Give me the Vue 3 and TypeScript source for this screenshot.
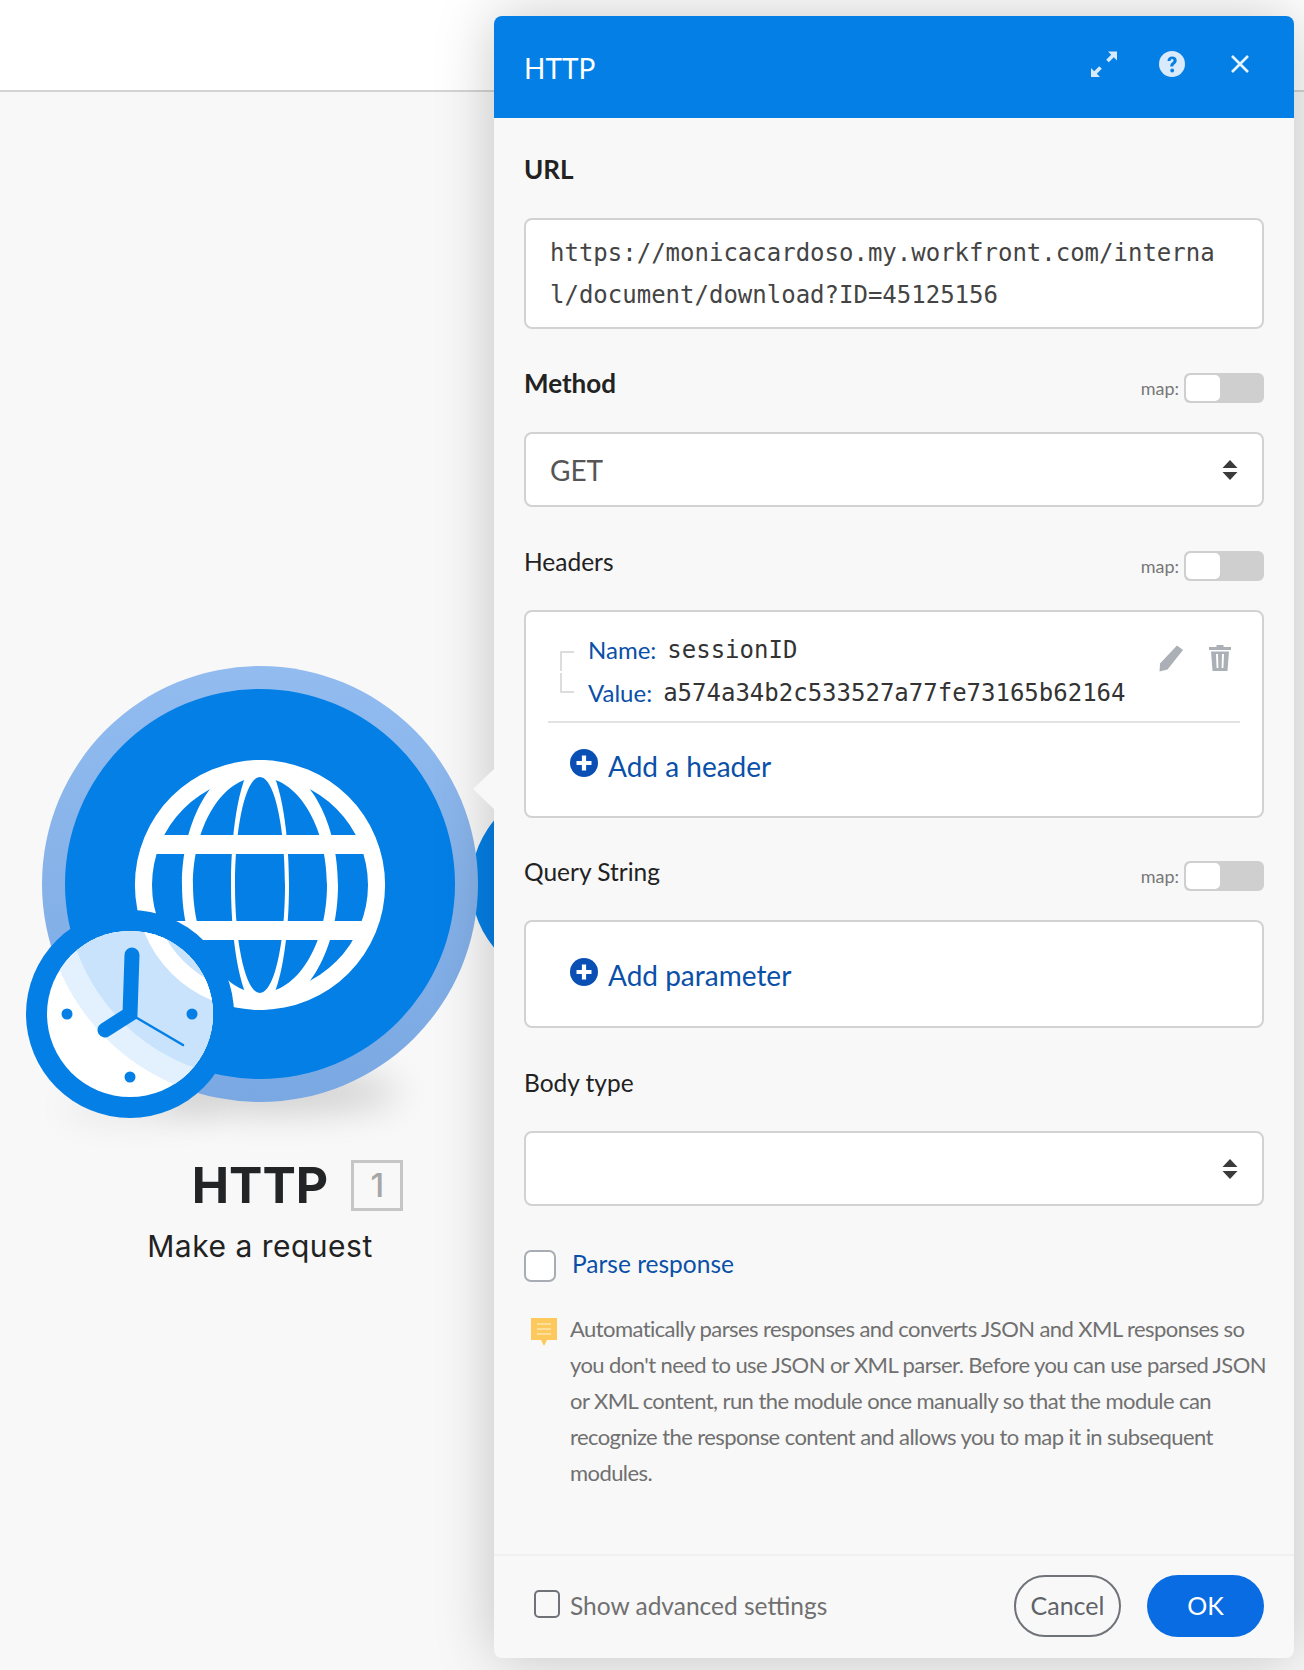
<template>
  <div class="page">
    <div class="topbar"></div>

    <div class="node">
      <svg class="node-art" viewBox="0 640 494 560" width="494" height="560">
        <defs>
          <linearGradient id="ring" x1="0" y1="0" x2="0" y2="1">
            <stop offset="0" stop-color="#92bcf0" />
            <stop offset="1" stop-color="#7aa8e2" />
          </linearGradient>
          <filter id="soft" filterUnits="userSpaceOnUse" x="0" y="960" width="494" height="240">
            <feGaussianBlur stdDeviation="18" />
          </filter>
          <clipPath id="face">
            <circle cx="130" cy="1014" r="83" />
          </clipPath>
          <g id="globe">
            <path fill="#fff" fill-rule="evenodd" d="M260 760a125 125 0 1 0 0 250a125 125 0 1 0 0-250zM260 777a108 108 0 1 1 0 216a108 108 0 1 1 0-216z" />
            <path fill="#fff" fill-rule="evenodd" d="M260 760c-16 0-29 56-29 125s13 125 29 125s29-56 29-125s-13-125-29-125zM260 777c-14 0-25 48-25 108s11 108 25 108s25-48 25-108s-11-108-25-108z" />
            <path fill="#fff" fill-rule="evenodd" d="M260 760c-43 0-78 56-78 125s35 125 78 125s78-56 78-125s-35-125-78-125zM260 777c-37 0-67 48-67 108s30 108 67 108s67-48 67-108s-30-108-67-108z" />
            <rect x="150" y="835" width="220" height="19" fill="#fff" />
            <rect x="150" y="921" width="220" height="19" fill="#fff" />
          </g>
        </defs>

        <ellipse cx="275" cy="1092" rx="125" ry="20" fill="#000" opacity="0.17" filter="url(#soft)" />
        <ellipse cx="140" cy="1108" rx="80" ry="10" fill="#000" opacity="0.1" filter="url(#soft)" />
        <circle cx="570" cy="884" r="99" fill="#0580e6" />
        <circle cx="260" cy="884" r="218" fill="url(#ring)" />
        <circle cx="260" cy="884" r="195" fill="#037fe6" />
        <use href="#globe" />

        <circle cx="130" cy="1014" r="104" fill="#037fe6" />
        <circle cx="130" cy="1014" r="83" fill="#fff" />
        <g clip-path="url(#face)">
          <circle cx="260" cy="884" r="218" fill="#e2f1fd" />
          <circle cx="260" cy="884" r="195" fill="#c8e3fb" />
          <use href="#globe" />
        </g>
        <circle cx="67" cy="1014" r="5.5" fill="#037fe6" />
        <circle cx="192" cy="1014" r="5.5" fill="#037fe6" />
        <circle cx="130" cy="1077" r="5.5" fill="#037fe6" />
        <path d="M132 955 L130 1014 L105 1030" fill="none" stroke="#037fe6" stroke-width="15" stroke-linecap="round" stroke-linejoin="miter" />
        <path d="M137 1018 L183 1045" stroke="#037fe6" stroke-width="2.5" stroke-linecap="round" />
      </svg>

      <div class="node-title">
        <span class="node-name">HTTP<span class="node-badge">1</span></span>
      </div>
      <div class="node-sub">Make a request</div>
    </div>

    <div class="pointer"></div>

    <section class="panel">
      <header class="panel-head">
        <h2>HTTP</h2>
        <div class="head-icons">
          <svg width="28" height="28" viewBox="0 0 28 28" fill="#d8eafc">
            <path d="M18 1.500h9v9l-3.200-3.200-5 5-2.600-2.600 5-5zM10 27H1v-9l3.200 3.200 5-5 2.600 2.600-5 5z" />
          </svg>
          <svg width="28" height="28" viewBox="0 0 28 28">
            <circle cx="14" cy="14" r="13" fill="#d8eafc" />
            <path d="M9.500 11c0-3 2-4.600 4.700-4.600s4.500 1.600 4.500 4c0 3.600-3.500 3.400-3.500 6.200h-3c0-4 3.300-4 3.300-6 0-1-.7-1.500-1.400-1.500-1 0-1.500.7-1.600 1.900z" fill="#037fe6" />
            <circle cx="14.200" cy="20.500" r="1.900" fill="#037fe6" />
          </svg>
          <svg width="28" height="28" viewBox="-4 -4 28 28">
            <path d="M2 2l16 16M18 2L2 18" stroke="#e6f2fd" stroke-width="2.600" />
          </svg>
        </div>
      </header>

      <div class="panel-body">
        <div class="label-row first"><label class="strong">URL</label></div>
        <div class="box url-box">https://monicacardoso.my.workfront.com/internal/document/download?ID=45125156</div>

        <div class="label-row">
          <label class="strong">Method</label>
          <span class="map"><em>map:</em><i class="toggle"><b></b></i></span>
        </div>
        <div class="box select">
          <span>GET</span>
          <svg width="16" height="20" viewBox="0 0 16 20" fill="#3a3a3a"><path d="M8 0l7.500 8H.5zM8 20L.5 12h15z" /></svg>
        </div>

        <div class="label-row">
          <label>Headers</label>
          <span class="map"><em>map:</em><i class="toggle"><b></b></i></span>
        </div>
        <div class="box list-box">
          <div class="header-item">
            <div class="tree"><i></i><i></i></div>
            <div class="kv">
              <div class="kv-row"><span class="key">Name:</span><code>sessionID</code></div>
              <div class="kv-row"><span class="key">Value:</span><code>a574a34b2c533527a77fe73165b62164</code></div>
            </div>
            <div class="item-tools">
              <svg width="26" height="28" viewBox="0 0 26 28" fill="#aab0b5">
                <path d="M19 1.500l6 4.500L9.500 25.500 1.500 27.500l.5-8z" />
              </svg>
              <svg width="24" height="28" viewBox="0 0 24 28" fill="#aab0b5">
                <path d="M8.500 3V1h7v2H23v3H1V3zM3 7.500h18L19.500 27h-15zM8 10l.6 14h1.800L10 10zm6 0l-.4 14h1.800L16 10z" fill-rule="evenodd" />
              </svg>
            </div>
          </div>
          <a class="add add-header">
            <svg width="28" height="28" viewBox="0 0 28 28"><circle cx="14" cy="14" r="14" fill="#0a50b4" /><path d="M14 6.500v15M6.500 14h15" stroke="#fff" stroke-width="4.200" /></svg>
            Add a header
          </a>
        </div>

        <div class="label-row">
          <label>Query String</label>
          <span class="map"><em>map:</em><i class="toggle"><b></b></i></span>
        </div>
        <div class="box query-box">
          <a class="add">
            <svg width="28" height="28" viewBox="0 0 28 28"><circle cx="14" cy="14" r="14" fill="#0a50b4" /><path d="M14 6.500v15M6.500 14h15" stroke="#fff" stroke-width="4.200" /></svg>
            Add parameter
          </a>
        </div>

        <div class="label-row"><label>Body type</label></div>
        <div class="box select">
          <span></span>
          <svg width="16" height="20" viewBox="0 0 16 20" fill="#3a3a3a"><path d="M8 0l7.500 8H.5zM8 20L.5 12h15z" /></svg>
        </div>

        <div class="parse">
          <i class="check"></i>
          <span>Parse response</span>
        </div>

        <div class="hint">
          <svg width="26" height="28" viewBox="0 0 26 28">
            <path d="M0 0h26v22H16l-3 6-3-6H0z" fill="#fdc95c" />
            <path d="M6 6h14M6 11h14M6 16h14" stroke="#fee6ae" stroke-width="1.500" />
          </svg>
          <p>Automatically parses responses and converts JSON and XML responses so you don't need to use JSON or XML parser. Before you can use parsed JSON or XML content, run the module once manually so that the module can recognize the response content and allows you to map it in subsequent modules.</p>
        </div>
      </div>

      <footer class="panel-foot">
        <i class="check small"></i>
        <span class="advanced">Show advanced settings</span>
        <button class="btn ghost">Cancel</button>
        <button class="btn primary">OK</button>
      </footer>
    </section>
  </div>
</template>

<script setup lang="ts">
</script>

<style>
html, body {
  margin: 0;
  background: #f8f8f8;
}
</style>

<style scoped>
.page {
  position: relative;
  width: 1304px;
  height: 1670px;
  overflow: hidden;
  background: #f8f8f8;
  font-family: Lato, "Open Sans", sans-serif;
  color: #222;
}

.topbar {
  height: 90px;
  background: #fff;
  border-bottom: 2px solid #d4d4d4;
}

/* node on the canvas */
.node {
  position: absolute;
  left: 0;
  top: 640px;
  width: 520px;
}
.node-art {
  display: block;
}
.node-title {
  position: absolute;
  top: 515px;
  left: 0;
  width: 520px;
  text-align: center;
}
.node-name {
  position: relative;
  display: inline-block;
  font-family: Inter, sans-serif;
  font-weight: 700;
  font-size: 50px;
  line-height: 60px;
  color: #222426;
}
.node-badge {
  position: absolute;
  left: calc(100% + 23px);
  top: 5px;
  box-sizing: border-box;
  width: 52px;
  height: 51px;
  border: 3px solid #c6c6c6;
  font-size: 33px;
  font-weight: 500;
  line-height: 45px;
  text-align: center;
  color: #a6a6a6;
}
.node-sub {
  position: absolute;
  top: 585px;
  left: 0;
  width: 520px;
  text-align: center;
  font-family: Inter, sans-serif;
  font-size: 30px;
  line-height: 42px;
  letter-spacing: 0.5px;
  color: #222;
}

.pointer {
  position: absolute;
  left: 473px;
  top: 768px;
  width: 22px;
  height: 42px;
  background: #f8f8f8;
  clip-path: polygon(100% 0, 0 50%, 100% 100%);
  z-index: 2;
}

/* settings panel */
.panel {
  position: absolute;
  left: 494px;
  top: 16px;
  width: 800px;
  height: 1642px;
  display: flex;
  flex-direction: column;
  background: #f8f8f8;
  border-radius: 8px;
  box-shadow: 0 0 60px rgba(0, 0, 0, 0.22);
  overflow: hidden;
}
.panel-head {
  height: 102px;
  flex: none;
  display: flex;
  align-items: center;
  justify-content: space-between;
  padding: 0 30px;
  background: #037fe6;
  color: #fff;
}
.panel-head h2 {
  margin: 0;
  font-size: 28px;
  font-weight: 400;
  position: relative;
  top: 1px;
}
.head-icons {
  display: flex;
  align-items: center;
  gap: 40px;
  position: relative;
  top: -3px;
  margin-right: 10px;
}

.panel-body {
  flex: 1;
  padding: 0 30px;
}
.label-row {
  height: 34px;
  margin: 37px 0 32px;
  display: flex;
  align-items: center;
  justify-content: space-between;
}
.label-row.first {
  margin-top: 34px;
}
.label-row label {
  font-size: 24.5px;
  color: #222;
}
.label-row label.strong {
  font-size: 26px;
  font-weight: 700;
}
.map {
  display: flex;
  align-items: center;
  gap: 5px;
  margin-top: 10px;
}
.map em {
  font-style: normal;
  font-size: 18px;
  color: #777;
}
.toggle {
  display: block;
  box-sizing: border-box;
  width: 80px;
  height: 30px;
  padding: 2px;
  background: #cfcfcf;
  border-radius: 6px;
}
.toggle b {
  display: block;
  width: 34px;
  height: 26px;
  background: #fff;
  border-radius: 5px;
}

.box {
  box-sizing: border-box;
  width: 740px;
  background: #fff;
  border: 2px solid #d2d2d2;
  border-radius: 8px;
}
.url-box {
  height: 111px;
  padding: 12px 24px;
  font-family: "DejaVu Sans Mono", monospace;
  font-size: 24px;
  line-height: 42px;
  color: #444;
  word-break: break-all;
}
.select {
  height: 75px;
  padding: 0 24px;
  display: flex;
  align-items: center;
  justify-content: space-between;
  font-size: 28px;
  color: #555;
}
.list-box {
  height: 208px;
  margin-bottom: -1px;
  padding: 0 22px;
}
.header-item {
  height: 109px;
  display: flex;
  border-bottom: 2px solid #e2e2e2;
}
.tree {
  width: 14px;
  margin: 39px 0 0 12px;
  flex: none;
}
.tree i {
  display: block;
  box-sizing: border-box;
  height: 20px;
  width: 14px;
  border-left: 2px solid #ddd;
}
.tree i:first-child {
  border-top: 2px solid #ddd;
  margin-bottom: 2px;
}
.tree i:last-child {
  border-bottom: 2px solid #ddd;
}
.kv {
  margin: 16px 0 0 14px;
  flex: 1;
}
.kv-row {
  height: 43px;
  display: flex;
  align-items: center;
  gap: 11px;
}
.key {
  font-size: 24px;
  color: #0a50a8;
}
.kv-row code {
  font-family: "DejaVu Sans Mono", monospace;
  font-size: 24px;
  color: #333;
}
.item-tools {
  display: flex;
  gap: 24px;
  margin: 32px 8px 0 0;
  height: 28px;
}
.add {
  display: flex;
  align-items: center;
  gap: 10px;
  font-size: 28px;
  color: #0a50a8;
}
.add svg {
  position: relative;
  top: -3px;
}
.add-header {
  padding: 26px 0 0 22px;
}
.query-box {
  height: 108px;
  padding: 36px 0 0 44px;
}

.parse {
  display: flex;
  align-items: center;
  gap: 16px;
  margin-top: 44px;
  font-size: 24.5px;
  color: #0a50a8;
}
.parse span {
  position: relative;
  top: -3px;
}
.check {
  display: block;
  flex: none;
  box-sizing: border-box;
  width: 32px;
  height: 32px;
  background: #fff;
  border: 2px solid #a8adb3;
  border-radius: 7px;
}
.hint {
  display: flex;
  gap: 13px;
  margin-top: 29px;
  padding-left: 7px;
}
.hint svg {
  flex: none;
  margin-top: 7px;
}
.hint p {
  margin: 0 -8px 0 0;
  font-size: 22px;
  letter-spacing: -0.57px;
  line-height: 36px;
  color: #707070;
}

.panel-foot {
  height: 104px;
  flex: none;
  box-sizing: border-box;
  border-top: 2px solid #f0f0f0;
  display: flex;
  align-items: center;
  padding: 0 30px 2px 40px;
}
.check.small {
  width: 26px;
  height: 28px;
  border: 2px solid #6f7378;
  border-radius: 5px;
  background: transparent;
  position: relative;
  top: -2px;
}
.advanced {
  margin-left: 10px;
  flex: 1;
  font-size: 24.5px;
  color: #707070;
  position: relative;
  top: -1px;
}
.btn {
  box-sizing: border-box;
  height: 62px;
  padding: 0 0 3px;
  border-radius: 31px;
  font-family: inherit;
  font-size: 25px;
}
.ghost {
  width: 107px;
  background: transparent;
  border: 2px solid #6f7378;
  color: #5f6368;
}
.primary {
  width: 117px;
  margin-left: 26px;
  background: #0a6ce2;
  border: 0;
  color: #fff;
}
</style>
